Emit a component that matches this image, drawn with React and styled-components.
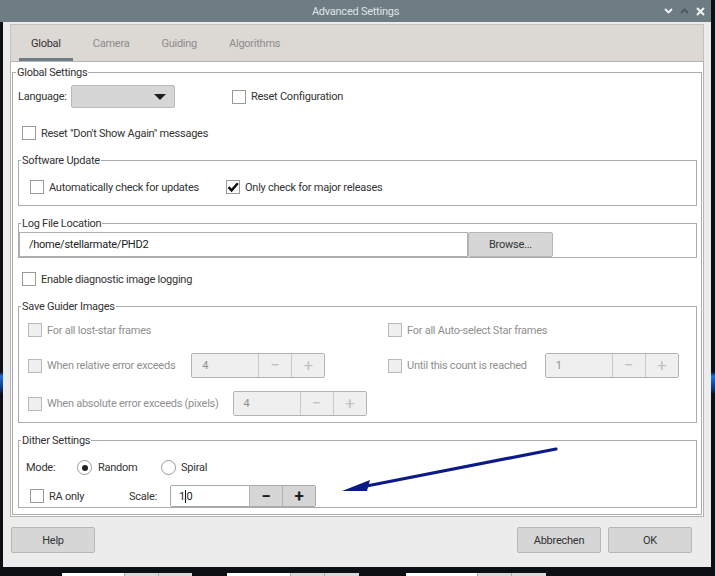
import React from 'react'
import styled, { createGlobalStyle } from 'styled-components'

const GlobalStyle = createGlobalStyle`
  html, body {
    margin: 0;
    padding: 0;
    background: #000;
  }
  body {
    font-family: Roboto, "Noto Sans", sans-serif;
    font-size: 11px;
    letter-spacing: -0.25px;
    color: #333;
  }
`

const Screen = styled.div`
  position: relative;
  width: 715px;
  height: 576px;
  overflow: hidden;
  background: linear-gradient(
    to bottom,
    #0c1014 0,
    #0c1014 372px,
    #1c6fe2 376px,
    #0a2f6a 390px,
    #0c1014 394px,
    #0c1014 100%
  );
`

const Window = styled.div`
  width: 711px;
  display: flex;
  flex-direction: column;
`

const TitleBar = styled.div`
  height: 22px;
  background: #6e7d84;
  display: grid;
  grid-template-columns: 1fr auto 1fr;
  align-items: center;
`

const Title = styled.div`
  color: #dfe3e5;
  font-size: 11px;
`

const Controls = styled.div`
  display: flex;
  justify-content: flex-end;
  align-items: center;
  gap: 7px;
  padding-right: 6px;
`

const Dialog = styled.div`
  margin-left: 3px;
  width: 708px;
  height: 545px;
  box-sizing: border-box;
  background: #ececec;
  padding: 2px 7px 0 7px;
  display: flex;
  flex-direction: column;
`

const TabBar = styled.div`
  height: 37px;
  box-sizing: border-box;
  background: #dcd8d4;
  border: 1px solid #c2c2c2;
  border-bottom: none;
  display: flex;
  align-items: stretch;
  gap: 8px;
  padding-left: 8px;
`

const Tab = styled.div`
  display: flex;
  align-items: center;
  padding: 3px 12px 0 12px;
  border-bottom: 3px solid ${p => (p.$active ? '#6e7d84' : 'transparent')};
  color: ${p => (p.$active ? '#333' : '#8c8c8c')};
  font-size: 11px;
`

const Pane = styled.div`
  height: 456px;
  box-sizing: border-box;
  background: #fff;
  border: 1px solid #b4b4b4;
  padding: 4px 1px 1px 1px;
  display: flex;
  flex-direction: column;
`

const GroupBox = styled.fieldset`
  margin: 0;
  margin-top: ${p => p.$top || 0}px;
  padding: 0;
  min-width: 0;
  border: 1px solid #ababab;
  flex: ${p => (p.$fill ? 1 : 'none')};
  display: flex;
  flex-direction: column;
`

const Legend = styled.legend`
  padding: 0 1px;
  margin-left: ${p => p.$indent || 2}px;
  font-size: 11px;
  line-height: 13px;
  color: #333;
`

const Body = styled.div`
  display: flex;
  flex-direction: column;
  padding: ${p => p.$pad};
`

const Row = styled.div`
  display: flex;
  align-items: center;
  height: ${p => p.$h || 14}px;
  margin-top: ${p => p.$top || 0}px;
  padding-left: ${p => p.$left || 0}px;
`

const Cell = styled.div`
  display: flex;
  align-items: center;
  width: ${p => (p.$w ? `${p.$w}px` : 'auto')};
  margin-left: ${p => p.$gap || 0}px;
  flex: none;
`

const Text = styled.span`
  font-size: 11px;
  white-space: nowrap;
  color: ${p => (p.$disabled ? '#8f8f8f' : '#333')};
  margin-left: ${p => p.$gap || 0}px;
  width: ${p => (p.$w ? `${p.$w}px` : 'auto')};
`

const Box = styled.span`
  width: 14px;
  height: 14px;
  box-sizing: border-box;
  flex: none;
  border: 1px solid ${p => (p.$disabled ? '#b9b9b9' : '#9a9a9a')};
  background: ${p => (p.$disabled ? '#efefef' : '#fff')};
  display: flex;
  align-items: center;
  justify-content: center;
`

const Radio = styled.span`
  width: 15px;
  height: 15px;
  box-sizing: border-box;
  flex: none;
  border-radius: 50%;
  border: 1px solid #9a9a9a;
  background: #fff;
  display: flex;
  align-items: center;
  justify-content: center;
  &::after {
    content: '';
    width: 6px;
    height: 6px;
    border-radius: 50%;
    background: ${p => (p.$checked ? '#222' : 'transparent')};
  }
`

const Combo = styled.div`
  width: 104px;
  height: 23px;
  box-sizing: border-box;
  background: #d6d6d6;
  border: 1px solid #bababa;
  border-radius: 2px;
  display: flex;
  align-items: center;
  justify-content: flex-end;
  padding-right: 8px;
  &::after {
    content: '';
    border-left: 6px solid transparent;
    border-right: 6px solid transparent;
    border-top: 6px solid #1e1e1e;
  }
`

const Field = styled.div`
  width: 449px;
  height: 25px;
  box-sizing: border-box;
  border: 1px solid #b0b0b0;
  background: #fff;
  display: flex;
  align-items: center;
  padding-left: 9px;
  font-size: 11px;
  color: #222;
`

const Button = styled.div`
  width: ${p => p.$w || 84}px;
  height: ${p => p.$h || 26}px;
  box-sizing: border-box;
  background: #d6d6d6;
  border: 1px solid #b6b6b6;
  border-radius: 2px;
  display: flex;
  align-items: center;
  justify-content: center;
  font-size: 11px;
  color: #333;
`

const Spin = styled.div`
  display: flex;
  height: ${p => p.$h || 25}px;
  box-sizing: border-box;
  border: 1px solid ${p => (p.$disabled ? '#b3b3b3' : '#a9a9a9')};
  border-radius: 2px;
  margin-left: ${p => p.$gap || 0}px;
  overflow: hidden;
`

const SpinValue = styled.div`
  width: ${p => p.$w}px;
  box-sizing: border-box;
  background: ${p => (p.$disabled ? '#efefef' : '#fff')};
  color: ${p => (p.$disabled ? '#8f8f8f' : '#222')};
  display: flex;
  align-items: center;
  padding-left: ${p => (p.$disabled ? 10 : 8)}px;
  font-size: 11px;
`

const SpinButton = styled.div`
  width: 33px;
  box-sizing: border-box;
  border-left: 1px solid ${p => (p.$disabled ? '#c9c9c9' : '#b2b2b2')};
  background: ${p => (p.$disabled ? '#efefef' : '#d6d6d6')};
  color: ${p => (p.$disabled ? '#c2c2c2' : '#1e1e1e')};
  display: flex;
  align-items: center;
  justify-content: center;
  font-size: 17px;
  font-weight: ${p => (p.$disabled ? 400 : 700)};
  line-height: 1;
`

const Caret = styled.span`
  display: inline-block;
  width: 1px;
  height: 13px;
  background: #111;
  vertical-align: -2px;
  margin-right: -2px;
`

const Footer = styled.div`
  display: flex;
  justify-content: space-between;
  margin-top: 10px;
  padding: 0 12px 0 1px;
`

const FooterRight = styled.div`
  display: flex;
  gap: 7px;
`

const Strip = styled.div`
  height: 9px;
  display: flex;
  align-items: flex-end;
`

const Ghost = styled.div`
  display: flex;
  height: 3px;
  margin-left: ${p => p.$left}px;
`

const GhostPart = styled.div`
  width: ${p => p.$w}px;
  background: ${p => (p.$light ? '#fff' : '#d9d9d9')};
  border-left: ${p => (p.$light ? 'none' : '1px solid #aaa')};
`

const Overlay = styled.svg`
  position: absolute;
  left: 0;
  top: 0;
  pointer-events: none;
`

const Check = () => (
  <svg width="12" height="12" viewBox="0 0 12 12">
    <path d="M1.5 6.2 L4.6 9.4 L10.8 2.2" fill="none" stroke="#111" strokeWidth="2.4" />
  </svg>
)

const CheckBox = ({ checked, disabled, label, gap = 5 }) => (
  <>
    <Box $disabled={disabled}>{checked && <Check />}</Box>
    {label && <Text $gap={gap} $disabled={disabled}>{label}</Text>}
  </>
)

const SpinBox = ({ value, width, height, disabled, gap, children }) => (
  <Spin $h={height} $disabled={disabled} $gap={gap}>
    <SpinValue $w={width} $disabled={disabled}>{children || value}</SpinValue>
    <SpinButton $disabled={disabled}>−</SpinButton>
    <SpinButton $disabled={disabled}>+</SpinButton>
  </Spin>
)

export default function App() {
  return (
    <Screen>
      <GlobalStyle />
      <Window>
        <TitleBar>
          <span />
          <Title>Advanced Settings</Title>
          <Controls>
            <svg width="9" height="6" viewBox="0 0 9 6">
              <path d="M1 1 L4.5 4.5 L8 1" fill="none" stroke="#f2f4f5" strokeWidth="1.8" />
            </svg>
            <svg width="9" height="6" viewBox="0 0 9 6">
              <path d="M1 5 L4.5 1.5 L8 5" fill="none" stroke="#4c585d" strokeWidth="1.8" />
            </svg>
            <svg width="9" height="9" viewBox="0 0 9 9">
              <path d="M1 1 L8 8 M8 1 L1 8" fill="none" stroke="#f2f4f5" strokeWidth="2" />
            </svg>
          </Controls>
        </TitleBar>

        <Dialog>
          <TabBar>
            <Tab $active>Global</Tab>
            <Tab>Camera</Tab>
            <Tab>Guiding</Tab>
            <Tab>Algorithms</Tab>
          </TabBar>

          <Pane>
            <GroupBox $fill>
              <Legend $indent={3}>Global Settings</Legend>
              <Body $pad="6px 4px 6px 5px">
                <Row $h={23}>
                  <Text $w={53}>Language:</Text>
                  <Combo />
                  <Cell $gap={57}>
                    <CheckBox label="Reset Configuration" />
                  </Cell>
                </Row>

                <Row $top={18} $left={4}>
                  <CheckBox label={'Reset "Don\'t Show Again" messages'} />
                </Row>

                <GroupBox $top={14}>
                  <Legend>Software Update</Legend>
                  <Body $pad="13px 0 11px 11px">
                    <Row>
                      <Cell $w={196}>
                        <CheckBox label="Automatically check for updates" />
                      </Cell>
                      <Cell>
                        <CheckBox checked label="Only check for major releases" />
                      </Cell>
                    </Row>
                  </Body>
                </GroupBox>

                <GroupBox $top={11}>
                  <Legend>Log File Location</Legend>
                  <Body $pad="2px 0 0 0">
                    <Row $h={25}>
                      <Field>/home/stellarmate/PHD2</Field>
                      <Button $w={85} $h={25}>Browse...</Button>
                    </Row>
                  </Body>
                </GroupBox>

                <Row $top={14} $left={4}>
                  <CheckBox label="Enable diagnostic image logging" />
                </Row>

                <GroupBox $top={14}>
                  <Legend>Save Guider Images</Legend>
                  <Body $pad="10px 0 6px 9px">
                    <Row>
                      <Cell $w={360}>
                        <CheckBox disabled label="For all lost-star frames" />
                      </Cell>
                      <Cell>
                        <CheckBox disabled label="For all Auto-select Star frames" />
                      </Cell>
                    </Row>
                    <Row $h={25} $top={16}>
                      <Cell $w={360}>
                        <CheckBox disabled label="When relative error exceeds" />
                        <SpinBox disabled gap={16} width={66} value="4" />
                      </Cell>
                      <Cell>
                        <CheckBox disabled label="Until this count is reached" />
                        <SpinBox disabled gap={18} width={66} value="1" />
                      </Cell>
                    </Row>
                    <Row $h={25} $top={13}>
                      <Cell>
                        <CheckBox disabled label="When absolute error exceeds (pixels)" />
                        <SpinBox disabled gap={14} width={66} value="4" />
                      </Cell>
                    </Row>
                  </Body>
                </GroupBox>

                <GroupBox $top={11}>
                  <Legend>Dither Settings</Legend>
                  <Body $pad="13px 0 0 7px">
                    <Row $h={15}>
                      <Text $w={51}>Mode:</Text>
                      <Cell $w={84}>
                        <Radio $checked />
                        <Text $gap={6}>Random</Text>
                      </Cell>
                      <Cell>
                        <Radio />
                        <Text $gap={5}>Spiral</Text>
                      </Cell>
                    </Row>
                    <Row $h={22} $top={10} $left={4}>
                      <Cell $w={99}>
                        <CheckBox label="RA only" />
                      </Cell>
                      <Text $w={41}>Scale:</Text>
                      <SpinBox width={78} height={22}>
                        1<Caret />.0
                      </SpinBox>
                    </Row>
                  </Body>
                </GroupBox>
              </Body>
            </GroupBox>
          </Pane>

          <Footer>
            <Button>Help</Button>
            <FooterRight>
              <Button>Abbrechen</Button>
              <Button>OK</Button>
            </FooterRight>
          </Footer>
        </Dialog>

        <Strip>
          <Ghost $left={62}>
            <GhostPart $light $w={62} />
            <GhostPart $w={33} />
            <GhostPart $w={33} />
          </Ghost>
          <Ghost $left={35}>
            <GhostPart $light $w={63} />
            <GhostPart $w={33} />
            <GhostPart $w={34} />
          </Ghost>
          <Ghost $left={47}>
            <GhostPart $light $w={71} />
            <GhostPart $w={33} />
            <GhostPart $w={34} />
          </Ghost>
        </Strip>
      </Window>

      <Overlay width="715" height="576" viewBox="0 0 715 576">
        <line x1="364" y1="486.5" x2="556" y2="449" stroke="#0c1a88" strokeWidth="3.2" strokeLinecap="round" />
        <polygon points="342,491 370,480 367,491" fill="#0c1a88" />
      </Overlay>
    </Screen>
  )
}
